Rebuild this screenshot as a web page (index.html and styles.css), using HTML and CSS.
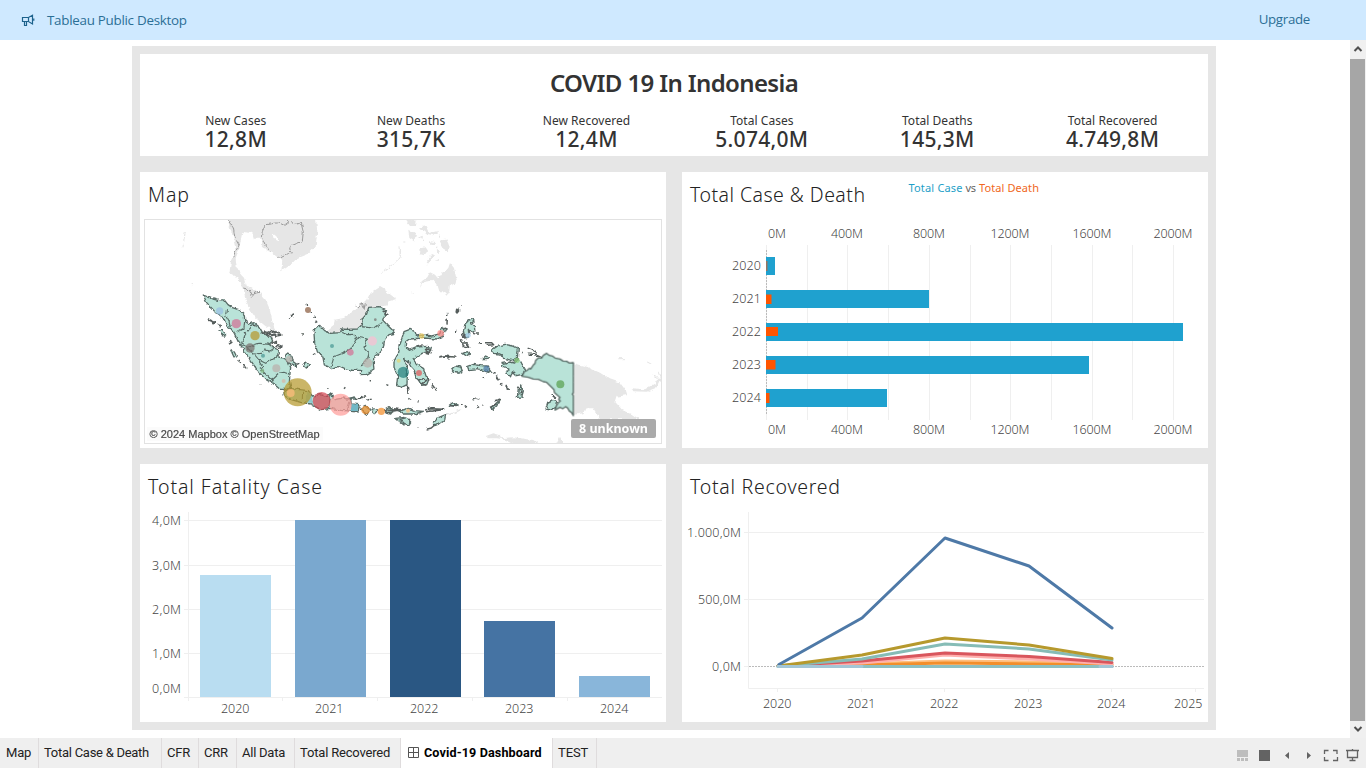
FILE: index.html
```html
<!DOCTYPE html>
<html lang="en">
<head>
<meta charset="utf-8">
<title>Covid-19 Dashboard</title>
<link rel="stylesheet" href="styles.css">
</head>
<body>
<header class="banner">
  <svg class="horn" width="14" height="14" viewBox="0 0 14 14"><path d="M1.500 4.500H7.500L11.500 2.300V11L7.500 8.500H1.500ZM7.500 4.500V8.500M3.500 8.500V12.500H5.500V8.500M12.800 5.500V7.800"/></svg>
  <span class="product">Tableau Public Desktop</span>
  <a class="upgrade">Upgrade</a>
</header>
<main class="workspace">
  <div class="dashboard">
    <section class="panel summary">
      <h1>COVID 19 In Indonesia</h1>
      <div class="kpis">
        <div class="kpi"><span>New Cases</span><b>12,8M</b></div>
        <div class="kpi"><span>New Deaths</span><b>315,7K</b></div>
        <div class="kpi"><span>New Recovered</span><b>12,4M</b></div>
        <div class="kpi"><span>Total Cases</span><b>5.074,0M</b></div>
        <div class="kpi"><span>Total Deaths</span><b>145,3M</b></div>
        <div class="kpi"><span>Total Recovered</span><b>4.749,8M</b></div>
      </div>
    </section>
    <section class="panel">
      <svg class="chart" viewBox="140 172 526 276">
        <text class="heading" x="148" y="202" textLength="41">Map</text>
        <clipPath id="frame"><rect x="145" y="220" width="516" height="223"/></clipPath>
        <filter id="coast" x="-5%" y="-5%" width="110%" height="110%"><feTurbulence type="fractalNoise" baseFrequency=".22" numOctaves="2" seed="4"/><feDisplacementMap in="SourceGraphic" scale="4" xChannelSelector="R" yChannelSelector="G"/></filter>
        <g clip-path="url(#frame)">
          <g filter="url(#coast)">
          <g class="base" transform="translate(144 218) scale(.33333)">
            <path d="M250 4L262 40L270 70L275 100L262 125L256 165L275 175L290 195L300 222L305 245L318 275L335 300L365 325L395 340L385 310L378 275L365 245L345 222L325 212L305 200L298 175L278 150L275 120L285 95L295 42L325 45L330 62L350 62L352 80L365 95L385 105L400 118L415 125L412 160L440 140L460 120L490 108L515 85L520 40L515 -4H250Z"/>
            <path d="M550 336L570 320L572 305L600 300L620 285L650 265L670 245L680 225L708 207L722 215L740 230L757 243L735 250L730 262L700 270L670 300L650 345H550Z"/>
            <path class="lines" d="M250 4L268 30L272 55L286 80L276 98L266 118M430 4L432 14L420 22L405 14L365 20L355 40L352 58L364 84L380 100M403 118L420 113L435 103L445 105L437 93L440 84L475 70L478 40L472 15L450 20L442 10M298 210L315 215L325 235L335 222L348 220M635 262L645 270L655 254L660 272L664 256"/>
            <path fill="#fff" d="M385 46L396 54L406 66L400 68L388 58Z"/>
            <path class="faint" d="M124 42L120 65L117 88M768 98V120L745 140L715 163M143 200h5"/>
            <g transform="translate(768 0)">
              <path d="M15 4L50 8L48 24L30 24ZM25 35L48 50L42 70L28 60ZM60 28L80 24L90 45L115 38L102 52L82 48ZM62 88L75 85L84 98L72 112L60 108ZM90 70L108 72L104 80L90 80ZM117 68L138 65L146 82L144 100L130 92ZM110 86L120 100L112 108ZM78 128L96 108L105 112L90 132L84 140ZM105 130L118 122L116 132ZM60 210L65 190L82 178L90 163L105 170L115 182L130 160L142 158L150 135L162 150L170 185L165 202L150 195L148 220L140 233L128 220L115 220L110 203L98 185L84 190L70 192Z"/>
              <path class="faint" d="M0 85L3 118M10 72h6M55 60l12-5 8 12M115 45l5 15M38 225h6"/>
            </g>
          </g>
          <g class="base" transform="translate(400 330) scale(.33333)">
            <path d="M518 98L560 110L600 128L630 148L660 158L678 182L682 195L650 200L645 215L665 238L695 252L718 268L600 268L580 235L560 235L550 250L518 255ZM695 175L735 178L765 160L776 142L782 145L768 175L740 185L700 184ZM132 258L180 238L185 240L155 254ZM258 318L280 310L300 315L302 325L340 322L400 330L420 345H345L310 328L290 325L262 325ZM468 345L480 320L492 345Z"/>
            <path class="faint" d="M655 86h20M740 95l15 8M758 135l15 8M774 125l8 20"/>
          </g>
          <g class="region" transform="translate(144 330) scale(.33333)">
            <path d="M178 -105L192 -99L207 -93L222 -89L240 -91L252 -76L265 -67L287 -60L301 -46L302 -27L315 -18L330 -22L345 -10L354 5L365 13L382 23L386 34L375 43L388 53L404 60L406 70L400 80L417 84L433 98L440 112L438 130L436 153L440 170L424 178L408 178L389 162L365 148L347 130L328 103L310 76L296 54L282 34L270 8L262 -3L248 -12L240 -34L217 -50L204 -65L188 -82Z"/>
            <path d="M510 10L512 -4L526 -15L542 2L560 10L590 8L592 -3L610 -2L640 -3L651 -13L655 -33L668 -48L674 -68L708 -70L728 -60L722 -45L716 -30L729 -16L745 0L752 10L735 14L722 28L718 52L706 68L690 80L688 96L690 120L668 133L649 134L650 121L626 121L602 115L585 108L563 119L552 110L541 105L537 82L520 65L512 38Z"/>
            <path d="M420 187L435 175L460 178L493 182L505 198L530 194L549 200L560 189L571 209L597 204L620 208L622 222L645 224L643 246L618 243L590 241L563 235L530 239L500 222L470 217L442 209L421 198ZM225 0L235 -2L245 15L240 22ZM259 58L271 66L277 78L270 81ZM420 85L427 72L440 75L443 92L457 102L457 109L437 100ZM477 104L486 96L496 104L487 114ZM682 242L690 233L700 242L691 251ZM722 240L735 233L748 242L740 252L724 248ZM755 265L780 262V285ZM648 238L664 229L680 240L668 253ZM606 207L634 201L637 207Z"/>
            <path class="inner" d="M247 -63L245 -42L255 -25L259 -9M302 -28L300 -5L278 6M330 -20L303 15L293 42L310 52L345 40L378 43M310 54L330 72L350 70L365 60L378 63L390 55M330 72L345 90L365 100L400 80M343 91L355 110L360 132M348 112L385 150L407 129L420 127L436 133M385 150L389 160M476 182L475 207M560 189L555 232M620 208L610 240M561 112L570 80L600 68L620 56L640 22L632 13L610 14L590 5M654 -10L690 -5L715 -23M668 27L660 55L675 70L668 95L650 105M642 22L668 27"/>
            <path class="islets" d="M191 -34l10 5 10 12M194 -30l12 5M205 -26l9 5M220 -18l10 6M229 -15l-3-2M255 42l10-6M254 36l8-5M281 90l10 8M296 103l10 12M347 166l5-2M330 -14l8 4M352 12l12-5 4 8 10-7 8 7 6-9 20 8M360 3l12 5 8-7 12 6 6-3M378 18l14-4 6 6M400 18l12-2M385 40l12-6 0 8M395 52l7-8 12 5-12 4M458 103l8-3M475 12h5M546 177h5M600 176l4-4M677 152h4M733 -48l-9 5M718 -50l10 5M716 -60l8 4-4 8M728 165l5 1M637 207l15-5M670 210l10-2M654 206l9-6M720 240l60 2M730 248l35-7M750 236l28 5M432 -37l7 2M443 -43l5-5-2 10M486 -78l2 3M508 -38h5M515 -28l4 6M300 12l7-5M507 75l7-4M438 176l3 3M500 -53h4"/>
            <path class="blue" d="M622 221L643 225L641 243H619Z"/><path class="blue" d="M490 184L504 200V220L488 216Z" opacity=".6"/>
          </g>
          <g class="region" transform="translate(400 330) scale(.33333)">
            <path d="M-8 75L-2 45L5 27L12 5L30 -2L45 5L50 18L70 15L95 18L118 12L127 -8L138 -2L127 19L112 27L70 24L28 27L17 35L16 50L28 61L50 51L80 49L94 52L91 62L66 70L38 88L55 106L71 116L78 138L87 147L80 164L65 166L56 151L48 143L42 120L33 111L25 96L10 85L22 105L22 136L21 164L5 172L-10 167L-7 138L-18 112L-18 94Z"/>
            <path d="M275 60L290 50L315 43L340 48L355 55L352 85L335 91L310 85L300 72L280 70ZM303 101L330 96L344 99L345 90L360 91L365 100L375 117L371 132L350 137L338 125L330 138L318 131L327 117L306 108ZM438 237L443 220L459 211L472 215L470 231L452 240ZM355 175L362 165L370 183L365 201L352 202ZM154 118L165 108L182 111L187 122L176 129L160 127ZM203 110L221 103L242 107L262 108L273 123L265 127L235 116L206 119ZM190 5L195 -18L207 -30L219 -34L222 -26L212 -20L223 -15L225 3L216 7L205 -2L207 21L194 24ZM188 70L202 65L211 73L196 76ZM0 242L25 235L45 242L70 244L45 252L5 252ZM99 280L115 263L137 254L134 270L120 281L104 287ZM0 268L20 263L32 276L26 285L14 281ZM148 226L158 218L175 225L165 230ZM272 233L286 222L302 207L290 228L278 238ZM247 86L257 78L265 82L260 86Z"/>
            <path class="islets" d="M50 48l18-4M75 60l10-6 7 7-12 5 15 2M77 70l10 3M115 80l17-2 35 4M118 81l24-4M142 85l8-6M184 40l14-2 8 14-16-4-6-20M187 12l6 10M235 38h8M255 38l20 0 6 6-22 2M260 46l20-2M364 66l4 3M383 52l12 4 14 10-9-5M386 73h25l14 7-22-2M277 127l10 2M289 136l7 14M303 166l4-3M317 168l10 8M352 170l14 16-10 9M250 144v3M55 151l10-5 15 5-15 10 14 5M80 140l7 12M95 163l14 18M22 167l2 22M25 205l8 6M52 212h4M75 240l20-4 38 2M78 245l45-5M86 232v8M150 227h20M183 224h5M194 232l10-3M218 210l6-3M226 204l12 3M229 234l5-4M246 228l6-2M270 232l20-10M284 212l18-5M80 298l14-4 13-12M52 295h4M174 -67l-3 16 5-6-3-8M182 -76l3 2M143 -52v10M142 -34l-1 15M129 0l10-6M165 4h4M218 8l8 6M228 12h6M455 194l10 9"/>
          </g>
          </g>
          <g class="region" transform="translate(400 330) scale(.33333)">
            <path d="M366 139L373 125L380 122L388 115L392 117L400 105L405 100L407 91L415 84L425 84L430 76L440 70L448 76L457 78L465 84L480 87L489 93L500 94L508 99L520 98V188L517 192L520 197V257L514 247L508 243L503 234L497 230L488 236L480 232L465 240L469 228L474 219L481 213L476 208L480 202L473 196L463 187L462 179L454 171L440 157L430 155L415 148L400 147L385 142Z"/>
          </g>
          <g class="marks" transform="translate(144 330) scale(.33333)">
            <circle cx="227" cy="-57" r="11" fill="#9abfe3"/><circle cx="277" cy="-19" r="14" fill="#d37295"/><circle cx="333" cy="17" r="14" fill="#b6992d"/><circle cx="318" cy="54" r="14" fill="#79706e"/><circle cx="357" cy="77" r="6" fill="#499894"/><circle cx="397" cy="115" r="12" fill="#bab0ac"/><circle cx="355" cy="123" r="6" fill="#86bc86"/><circle cx="419" cy="153" r="6" fill="#d7b5a6"/><circle cx="435" cy="88" r="10" fill="#bab0ac"/><circle cx="461" cy="187" r="42" fill="#b6992d"/><circle cx="440" cy="189" r="12" fill="#ffbe7d"/><circle cx="533" cy="213" r="27" fill="#d34450"/><circle cx="590" cy="224" r="33" fill="#ff9d9a"/><circle cx="665" cy="240" r="13" fill="#f28e2b"/><circle cx="712" cy="244" r="11" fill="#f28e2b"/><circle cx="564" cy="48" r="6" fill="#499894"/><circle cx="619" cy="67" r="10" fill="#d37295"/><circle cx="685" cy="33" r="14" fill="#fabfd2"/><circle cx="671" cy="99" r="14" fill="#bab0ac"/><circle cx="694" cy="-31" r="4" fill="#79706e"/><circle cx="492" cy="-60" r="9" fill="#8b5d40"/><circle cx="764" cy="92" r="6" fill="#e2d775"/>
          </g>
          <g class="marks" transform="translate(400 330) scale(.33333)">
            <circle cx="10" cy="127" r="17" fill="#26817e"/><circle cx="57" cy="129" r="9" fill="#e15759"/><circle cx="122" cy="10" r="10" fill="#ff8583"/><circle cx="65" cy="18" r="8" fill="#f1ce63"/><circle cx="259" cy="116" r="9" fill="#4e79a7"/><circle cx="351" cy="91" r="8" fill="#8cd17d"/><circle cx="481" cy="163" r="12" fill="#59a14f"/><circle cx="24" cy="242" r="6" fill="#ffbe7d"/><circle cx="204" cy="16" r="8" fill="#a0cbe8"/>
          </g>
        </g>
        <rect class="frame" x="144.500" y="219.500" width="517" height="224"/>
        <rect x="147" y="427" width="176" height="14" fill="#fbfbfb"/>
        <text class="credit" x="149.500" y="438" textLength="170">© 2024 Mapbox © OpenStreetMap</text>
        <rect x="571" y="419" width="85" height="19" rx="2" fill="#aaa"/>
        <text class="unknown" x="579" y="433" textLength="69">8 unknown</text>
      </svg>
    </section>
    <section class="panel">
      <svg class="chart" viewBox="682 172 526 276">
        <text class="heading" x="690" y="202" textLength="175">Total Case &amp; Death</text>
        <g class="legend"><text x="908.500" y="192" textLength="54" fill="#1f9fc8">Total Case</text><text x="965.500" y="192" textLength="10.500" fill="#666">vs</text><text x="979" y="192" textLength="60" fill="#f06722">Total Death</text></g>
        <path class="grid" d="M766.500 245V420M807.500 245V420M847.500 245V420M888.500 245V420M929.500 245V420M970.500 245V420M1010.500 245V420M1051.500 245V420M1092.500 245V420M1132.500 245V420M1173.500 245V420"/>
        <path class="zero" d="M766.500 250V414"/>
        <path fill="#1fa1cf" d="M766 257h9v18h-9zM766 290h163v18H766zM766 323h417v18H766zM766 356h323v18H766zM766 389h121v18H766z"/>
        <path fill="#ff5500" d="M766 294.500h5.500v9.500h-5.500zM766 327h12v9h-12zM766 360h9.500v9.500H766zM766 393h3.500v10H766z"/><path fill="#987460" d="M766 261h1.500v10h-1.500z"/>
        <g class="label">
          <text x="768" y="238" textLength="18">0M</text><text x="831" y="238" textLength="32">400M</text><text x="913" y="238" textLength="32">800M</text><text x="990.500" y="238" textLength="39">1200M</text><text x="1072.500" y="238" textLength="39">1600M</text><text x="1153.500" y="238" textLength="39">2000M</text>
          <text x="768" y="434" textLength="18">0M</text><text x="831" y="434" textLength="32">400M</text><text x="913" y="434" textLength="32">800M</text><text x="990.500" y="434" textLength="39">1200M</text><text x="1072.500" y="434" textLength="39">1600M</text><text x="1153.500" y="434" textLength="39">2000M</text>
          <text x="732" y="270" textLength="29">2020</text><text x="732" y="303" textLength="29">2021</text><text x="732" y="336" textLength="29">2022</text><text x="732" y="369" textLength="29">2023</text><text x="732" y="402" textLength="29">2024</text>
        </g>
      </svg>
    </section>
    <section class="panel">
      <svg class="chart" viewBox="140 464 526 258">
        <text class="heading" x="148" y="494" textLength="174">Total Fatality Case</text>
        <path class="grid" d="M184 520.500H662M184 565.500H662M184 609.500H662M184 653.500H662M184 697.500H662M188.500 512V701M282.500 698v3M377.500 698v3M472.500 698v3M567.500 698v3"/>
        <path fill="#b9ddf1" d="M200 575h71v122h-71z"/><path fill="#7aa8cf" d="M295 520h71v177h-71z"/><path fill="#2a5783" d="M390 520h71v177h-71z"/><path fill="#4573a3" d="M484 621h71v76h-71z"/><path fill="#89b6da" d="M579 676h71v21h-71z"/>
        <g class="label">
          <text x="152" y="525" textLength="29">4,0M</text><text x="152" y="570" textLength="29">3,0M</text><text x="152" y="614" textLength="29">2,0M</text><text x="152" y="658" textLength="29">1,0M</text><text x="152" y="693" textLength="29">0,0M</text>
          <text x="221" y="713" textLength="28.500">2020</text><text x="315" y="713" textLength="28.500">2021</text><text x="410" y="713" textLength="28.500">2022</text><text x="505" y="713" textLength="28.500">2023</text><text x="600" y="713" textLength="28.500">2024</text>
        </g>
      </svg>
    </section>
    <section class="panel">
      <svg class="chart" viewBox="682 464 526 258">
        <text class="heading" x="690" y="494" textLength="150">Total Recovered</text>
        <path class="grid" d="M744 532.500H1204M744 599.500H1204M744 666.500H749M748.500 512V688.500H1204M777.500 689v3M861.500 689v3M944.500 689v3M1028.500 689v3M1111.500 689v3M1195.500 689v3"/>
        <path class="zero" d="M749 666.500H1204"/>
        <g class="series">
          <path stroke="#ffbe7d" d="M778 666L862 664L945 661L1029 662L1112 664"/>
          <path stroke="#f28e2b" d="M778 666L862 665L945 663L1029 664L1112 665"/>
          <path stroke="#ffb0ad" d="M778 666L862 663L945 655L1029 659L1112 664"/>
          <path stroke="#d9565d" d="M778 666L862 661L945 653L1029 656.500L1112 662.500"/>
          <path stroke="#86bcb6" d="M778 666L862 659L945 644L1029 649L1112 660"/>
          <path stroke="#b6992d" d="M778 666L862 655L945 638L1029 645L1112 658.500"/>
          <path stroke="#4e79a7" d="M779 664.500L862 618L945 538L1029 566L1112 628"/>
          <path stroke="#8ebfc0" d="M778 666.500H1112"/>
          <path stroke="#a3c6d6" d="M778 666.500H862M1100 666.500H1112"/>
        </g>
        <g class="label">
          <text x="687" y="537" textLength="54">1.000,0M</text><text x="698" y="604" textLength="43">500,0M</text><text x="712" y="671" textLength="29">0,0M</text>
          <text x="763" y="708" textLength="28.500">2020</text><text x="847" y="708" textLength="28.500">2021</text><text x="930" y="708" textLength="28.500">2022</text><text x="1014" y="708" textLength="28.500">2023</text><text x="1097" y="708" textLength="28.500">2024</text><text x="1174" y="708" textLength="28.500">2025</text>
        </g>
      </svg>
    </section>
  </div>
  <div class="scrollbar">
    <svg width="16" height="18" viewBox="0 0 16 18"><path d="M4.500 11L8 7.500L11.500 11"/></svg>
    <div class="thumb"></div>
    <svg width="16" height="16" viewBox="0 0 16 16"><path d="M4.500 6L8 9.500L11.500 6"/></svg>
  </div>
</main>
<footer class="tabs">
  <span class="tab t1">Map</span><span class="tab t2">Total Case &amp; Death</span><span class="tab t3">CFR</span><span class="tab t4">CRR</span><span class="tab t5">All Data</span><span class="tab t6">Total Recovered</span>
  <span class="tab t7 active"><svg width="11" height="11" viewBox="0 0 11 11"><path d="M.5 .5H10.500V10.500H.5ZM5.500 .5V10.500M.5 5.500H10.500"/></svg>Covid-19 Dashboard</span><span class="tab t8">TEST</span>
  <svg class="tools" width="136" height="30" viewBox="1230 738 136 30">
    <path fill="#bdbdbd" d="M1237 750h11v7h-11zM1237 758h3v3h-3zM1241 758h3v3h-3zM1245 758h3v3h-3z"/>
    <path fill="#636363" d="M1259 750h11v11h-11zM1289 752v7l-4-3.500zM1307 752v7l4-3.500z"/>
    <path class="strokes" d="M1324.500 754v-3.500h4M1333 750.500h4v3.500M1337.500 757v3.500h-4.500M1328.500 760.500h-4V757M1346 750.500h13M1347.500 751v6.500h10V751M1352.500 749v2M1352.500 758v2.500M1349.500 760.500h6"/>
  </svg>
</footer>
</body>
</html>
```
FILE: styles.css
```css
* { box-sizing: border-box; }
body { margin: 0; width: 1366px; height: 768px; overflow: hidden; display: flex; flex-direction: column; background: #fff; font-family: "Noto Sans", sans-serif; color: #333; }
.banner { height: 40px; flex: none; display: flex; align-items: center; padding: 0 56px 0 21px; background: #cfe9ff; color: #2b6f96; font: 14px "Open Sans", sans-serif; }
.horn { fill: none; stroke: #1d628c; stroke-width: 1.2; }
.product { margin-left: 12px; font-size: 13.4px; letter-spacing: -.28px; }
.upgrade { margin: -2px 0 0 auto; font-size: 13.3px; letter-spacing: -.3px; }
.workspace { height: 698px; flex: none; display: flex; justify-content: space-between; padding: 0 0 0 132px; }
.dashboard { margin-top: 6px; width: 1084px; height: 684px; padding: 8px; background: #e6e6e6; display: grid; grid-template-columns: 526px 526px; grid-template-rows: 102px 276px 258px; gap: 16px; }
.panel { background: #fff; }
.summary { grid-column: span 2; }
h1 { margin: 0; padding-top: 12px; font-size: 24px; line-height: 34px; font-weight: 600; text-align: center; letter-spacing: -.63px; }
.kpis { display: grid; grid-template-columns: repeat(6, 175.4px); padding: 13px 0 0 8px; }
.kpi { display: flex; flex-direction: column; align-items: center; font-size: 12px; line-height: 15px; letter-spacing: .04px; }
.kpi b { font-weight: 500; font-size: 21px; line-height: 23px; letter-spacing: .3px; }
.chart { display: block; width: 100%; height: 100%; }
.heading { font-size: 19.5px; font-weight: 300; fill: #222; }
.label { font-size: 12.5px; font-weight: 300; fill: #444; }
.legend { font-size: 11px; }
.grid { fill: none; stroke: #efefef; }
.zero { fill: none; stroke: #bbb; stroke-dasharray: 2 1; }
.series { fill: none; stroke-width: 3; stroke-linecap: round; stroke-linejoin: round; }
.base { fill: #e6e6e6; }
.lines { fill: none; stroke: #999; stroke-width: 3; }
.faint { fill: none; stroke: #e5e5e5; stroke-width: 3; }
.region { fill: #b9e3d8; stroke: #586b66; stroke-width: 4; stroke-linejoin: round; }
.region .inner { fill: none; stroke-width: 3.3; }
.region .islets { fill: none; stroke: #555d5b; stroke-width: 4.5; }
.region .blue { fill: #72b8c6; stroke: none; }
.marks { fill-opacity: .72; }
.frame { fill: none; stroke: #e2e2e2; }
.credit { font: 11px "Liberation Sans", sans-serif; fill: #444; stroke: #555; stroke-width: .2; }
.unknown { font-size: 12.5px; font-weight: 700; fill: #fff; }
.scrollbar { width: 16px; background: #f0f0f0; display: flex; flex-direction: column; }
.scrollbar svg { display: block; fill: none; stroke: #505050; stroke-width: 2; }
.thumb { width: 15px; height: 662px; margin-top: 1px; background: #a6a6a6; }
.tabs { height: 30px; flex: none; display: flex; background: #efefef; font: 13px/29px Roboto, sans-serif; color: #222; }
.tab { border-right: 1px solid #dfdcdd; white-space: nowrap; padding-left: 6px; height: 30px; letter-spacing: -.18px; }
.t1 { width: 39px; } .t2 { width: 123px; padding-left: 5px; letter-spacing: -.27px; } .t3 { width: 37px; padding-left: 5px; } .t4 { width: 38px; padding-left: 5px; } .t5 { width: 58px; padding-left: 5px; letter-spacing: -.25px; } .t6 { width: 106px; padding-left: 5px; } .t8 { width: 44px; padding-left: 5px; letter-spacing: -.1px; }
.t7 { width: 152px; padding-left: 7px; letter-spacing: .12px; }
.active { background: #fff; font-weight: 700; font-size: 12.6px; line-height: 28px; color: #000; display: flex; align-items: center; gap: 5px; padding-bottom: 1px; }
.active svg { fill: none; stroke: #555; }
.tools { margin-left: auto; }
.strokes { fill: none; stroke: #636363; stroke-width: 1.3; }
```
